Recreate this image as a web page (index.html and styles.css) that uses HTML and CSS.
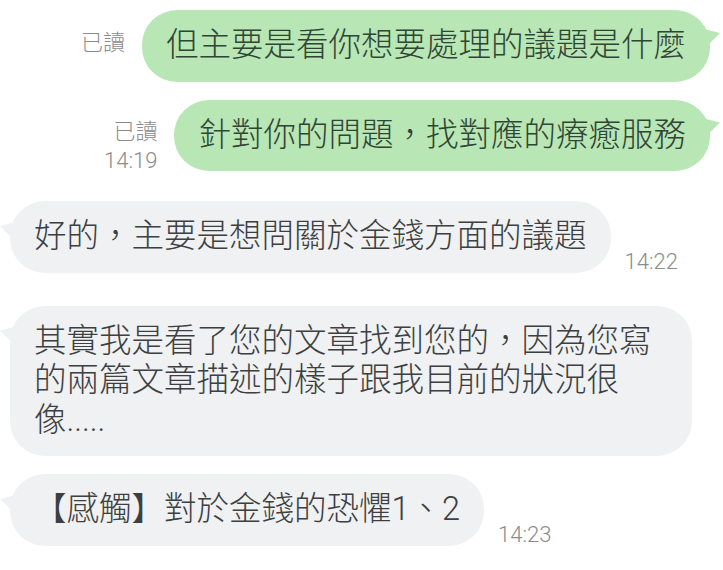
FILE: index.html
```html
<!DOCTYPE html>
<html lang="zh-Hant">
<head>
  <meta charset="UTF-8">
  <meta name="viewport" content="width=device-width, initial-scale=1.0">
  <title>聊天</title>
  <link rel="stylesheet" href="styles.css">
</head>
<body>
  <div class="chat">
    <div class="row out">
      <div class="meta meta-lift">
        <span>已讀</span>
      </div>
      <div class="bubble green">但主要是看你想要處理的議題是什麼</div>
    </div>

    <div class="row out">
      <div class="meta">
        <span>已讀</span>
        <span>14:19</span>
      </div>
      <div class="bubble green">針對你的問題，找對應的療癒服務</div>
    </div>

    <div class="row in first">
      <div class="bubble gray">好的，主要是想問關於金錢方面的議題</div>
      <div class="meta">
        <span>14:22</span>
      </div>
    </div>

    <div class="row in first">
      <div class="bubble gray">其實我是看了您的文章找到您的，因為您寫的兩篇文章描述的樣子跟我目前的狀況很像.....</div>
    </div>

    <div class="row in">
      <div class="bubble gray">【感觸】對於金錢的恐懼1、2</div>
      <div class="meta">
        <span>14:23</span>
      </div>
    </div>
  </div>
</body>
</html>
```

FILE: styles.css
```css
* {
  box-sizing: border-box;
  margin: 0;
  padding: 0;
}
body {
  font-family: 'Roboto', 'Noto Sans CJK SC', sans-serif;
  font-weight: 300;
  background-color: white;
  color: #3a3a3a;
}
.chat {
  display: flex;
  flex-direction: column;
  padding: 10px 13px 0 10px;
}
.row {
  display: flex;
  align-items: flex-end;
  gap: 17px;
  margin-bottom: 18px;
}
.row.out {
  justify-content: flex-end;
}
.row.in {
  justify-content: flex-start;
  gap: 14px;
}
.row.out + .row.in {
  margin-top: 12px;
}
.row.in.first + .row.in.first {
  margin-top: 15px;
}
.bubble {
  position: relative;
  font-size: 32.5px;
  line-height: 39.5px;
  padding: 16px 24px;
  border-radius: 35px;
  max-width: 682px;
}
.green {
  background-color: #b8e6b4;
  color: #2f4535;
}
.gray {
  background-color: #eff1f3;
  color: #3d3f41;
}
.green::after,
.gray::before {
  content: "";
  position: absolute;
  top: 19px;
  width: 16px;
  height: 20px;
}
.green::after {
  right: -10px;
  background-color: #b8e6b4;
  clip-path: polygon(0 0, 100% 20%, 0 100%);
}
.gray::before {
  left: -10px;
  top: 21px;
  background-color: #eff1f3;
  clip-path: polygon(100% 0, 0 20%, 100% 100%);
}
.meta {
  display: flex;
  flex-direction: column;
  align-items: flex-end;
  font-size: 22px;
  line-height: 28.5px;
  color: #8c8c8c;
  margin-bottom: -4px;
  flex-shrink: 0;
}
.meta-lift {
  padding-bottom: 28px;
}
```
